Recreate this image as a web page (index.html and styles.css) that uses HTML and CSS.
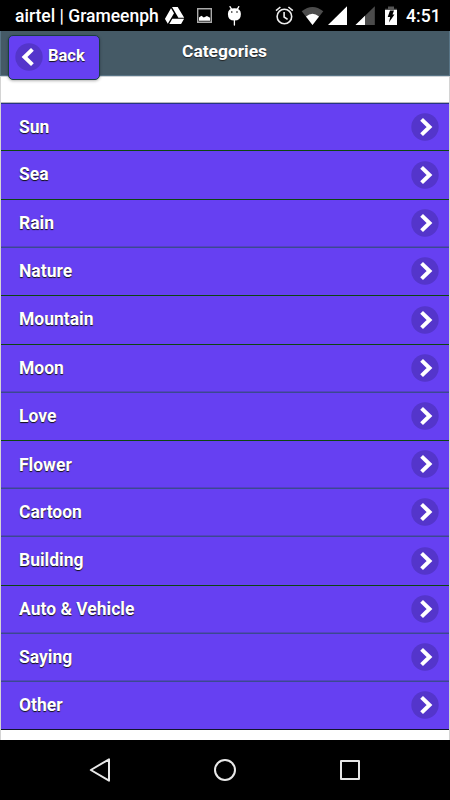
FILE: index.html
```html
<!DOCTYPE html>
<html lang="en">
<head>
<meta charset="utf-8">
<title>Categories</title>
<link rel="stylesheet" href="styles.css">
</head>
<body>
<svg class="defs" width="0" height="0">
  <symbol id="chevron" viewBox="0 0 28 28">
    <circle cx="14" cy="14" r="13.7" fill="#5435cb"/>
    <path d="M10.6 6.4 18.5 14l-7.9 7.6" fill="none" stroke="#fff" stroke-width="4"/>
  </symbol>
</svg>
<div class="status">
  <span class="carrier">airtel | Grameenph</span>
  <svg class="status-icons" width="285" height="31" viewBox="165 0 285 31">
    <path fill="#fff" d="M172 7h5.7l6.5 10.8h-5.8zM171 8.3l3 5-6.2 10.5-2.9-5zM172.3 18.8h11.8l-3 5.2h-11.8z"/>
    <path d="M197.7 8.8h13.6v13.5h-13.6z" fill="none" stroke="#aaa" stroke-width="1.4"/>
    <path d="M199 20.8V17.6l2.4-1.8 2.4 1.7 3.1-1.5 3.2 1.7v3.1z" fill="#fff"/>
    <path d="M227.9 13.9q0-5.7 6.5-5.7t6.5 5.7q0 6.7-6.5 6.7t-6.5-6.7z" fill="#fff"/>
    <path d="m230 6.6 1.6 2.8m7.2-2.8-1.6 2.8M234.4 20v5" stroke="#fff" stroke-width="1.3" stroke-linecap="round"/>
    <circle cx="231.8" cy="12" r=".8"/><circle cx="237" cy="12" r=".8"/>
    <g fill="none" stroke="#eee" stroke-width="1.6">
      <circle cx="284.4" cy="16.5" r="7.3"/>
      <path d="M284.1 12v5l3.5 2.3M276 10.6l4.4-3.6M288.4 7l4.4 3.6"/>
    </g>
    <path d="M301.7 11.3Q312.5 2.8 323.3 11.3L312.5 25z" fill="#4c4c4c"/>
    <path d="M306 16.5q6.5-5.4 13 0L312.5 25z" fill="#fff"/>
    <path d="M347 6.3V25h-19z" fill="#fff"/>
    <path d="M374.8 6.3V25h-19.3z" fill="#4c4c4c"/>
    <path d="M365 15.8V25h-9.5z" fill="#fff"/>
    <path d="M388 6.5h6v2.2h3v2h-12v-2h3z" fill="#555"/>
    <path d="M385 10h12v15h-12z" fill="#fff"/>
    <path d="m390 10.5 4 0-1.5 4h2l-5.6 8 1.3-5.5h-2.5z"/>
  </svg>
  <span class="clock">4:51</span>
</div>
<div class="app">
  <header class="header">
    <a class="back">
      <svg width="28" height="28" viewBox="0 0 28 28"><circle cx="14" cy="14" r="13.7" fill="#5435cb"/><path d="M17.4 6.4 9.5 14l7.9 7.6" fill="none" stroke="#fff" stroke-width="4"/></svg>
      <span>Back</span>
    </a>
    <h1>Categories</h1>
  </header>
  <ul class="list">
    <li class="low"><span>Sun</span><svg><use href="#chevron"/></svg></li>
    <li><span>Sea</span><svg><use href="#chevron"/></svg></li>
    <li class="soft"><span>Rain</span><svg><use href="#chevron"/></svg></li>
    <li><span>Nature</span><svg><use href="#chevron"/></svg></li>
    <li><span>Mountain</span><svg><use href="#chevron"/></svg></li>
    <li class="soft"><span>Moon</span><svg><use href="#chevron"/></svg></li>
    <li><span>Love</span><svg><use href="#chevron"/></svg></li>
    <li class="soft low"><span>Flower</span><svg><use href="#chevron"/></svg></li>
    <li class="soft"><span>Cartoon</span><svg><use href="#chevron"/></svg></li>
    <li><span>Building</span><svg><use href="#chevron"/></svg></li>
    <li class="soft"><span>Auto &amp; Vehicle</span><svg><use href="#chevron"/></svg></li>
    <li class="soft"><span>Saying</span><svg><use href="#chevron"/></svg></li>
    <li class="last"><span>Other</span><svg><use href="#chevron"/></svg></li>
  </ul>
</div>
<nav class="nav">
  <svg width="450" height="60" viewBox="0 0 450 60" fill="none" stroke="#e8e8e8" stroke-width="2" stroke-linejoin="round">
    <path d="M109 19.3v21.4L90.8 30z"/>
    <circle cx="225" cy="30" r="10"/>
    <path d="M341 21h18v18h-18z"/>
  </svg>
</nav>
</body>
</html>
```

FILE: styles.css
```css
* { box-sizing: border-box; }
body {
  margin: 0;
  width: 450px;
  height: 800px;
  display: flex;
  flex-direction: column;
  overflow: hidden;
  background: #000;
  color: #fff;
  font-family: Roboto, "Liberation Sans", sans-serif;
}
.defs { position: absolute; }
.status {
  height: 31px;
  display: flex;
  position: relative;
  line-height: 33px;
  font-weight: 500;
}
.carrier { width: 165px; padding-left: 15px; font-size: 17.5px; white-space: nowrap; }
.status-icons { flex: none; }
.clock { position: absolute; left: 406px; top: 0; font-size: 17.6px; }
.app {
  height: 709px;
  background: #fff;
  border: solid #d4d4d4;
  border-width: 0 1px;
}
.header {
  display: flex;
  height: 45px;
  margin: 0 -1px;
  padding: 4px 0 0 8px;
  background: #455a66;
  border: 1px solid #587485;
  border-width: 0 1px 1px;
  box-shadow: 0 1px 0 #d0d4d8;
}
.back {
  display: flex;
  align-items: center;
  gap: 5px;
  width: 92px;
  height: 45px;
  margin-left: -1px;
  padding-left: 6px;
  background: #6640f2;
  border: 1px solid #184040;
  border-radius: 5px;
  box-shadow: 0 1px 3px rgba(0, 0, 0, .3);
  font-size: 16.5px;
  font-weight: 700;
  text-shadow: 0 1px 1px #111;
}
.back svg { margin-top: -1px; }
.back span { margin-top: -5px; }
h1 {
  margin: 6px 0 0 82px;
  font-size: 17.4px;
  line-height: 20px;
  font-weight: 700;
  text-shadow: 0 1px 1px #222;
}
.list {
  margin: 27px 0 0;
  padding: 0;
  list-style: none;
  display: grid;
  grid-template-rows: 47px 49px 48px 48px 49px 48px 48px 48px 48px 49px 48px 48px 48px;
  background: #6640f2;
  border-top: 1px solid #253584;
  box-shadow: 0 -1px 0 #b9b9b9;
}
.list li {
  display: flex;
  justify-content: space-between;
  align-items: center;
  padding: 0 10px 0 18px;
  border-bottom: 1px solid #0d4711;
  font-size: 17.5px;
  font-weight: 700;
  text-shadow: 0 1px 1px #111;
}
.list span { margin-top: -2px; }
.list .low span { margin-top: 0; }
.list .soft {
  border-bottom-color: #3a4a90;
  box-shadow: inset 0 -1px 0 #5540c4;
}
.list .last { border-bottom-color: #12142c; }
.list svg { width: 28px; height: 28px; margin-top: -1px; }
.nav { height: 60px; }
.nav svg { display: block; }
```
